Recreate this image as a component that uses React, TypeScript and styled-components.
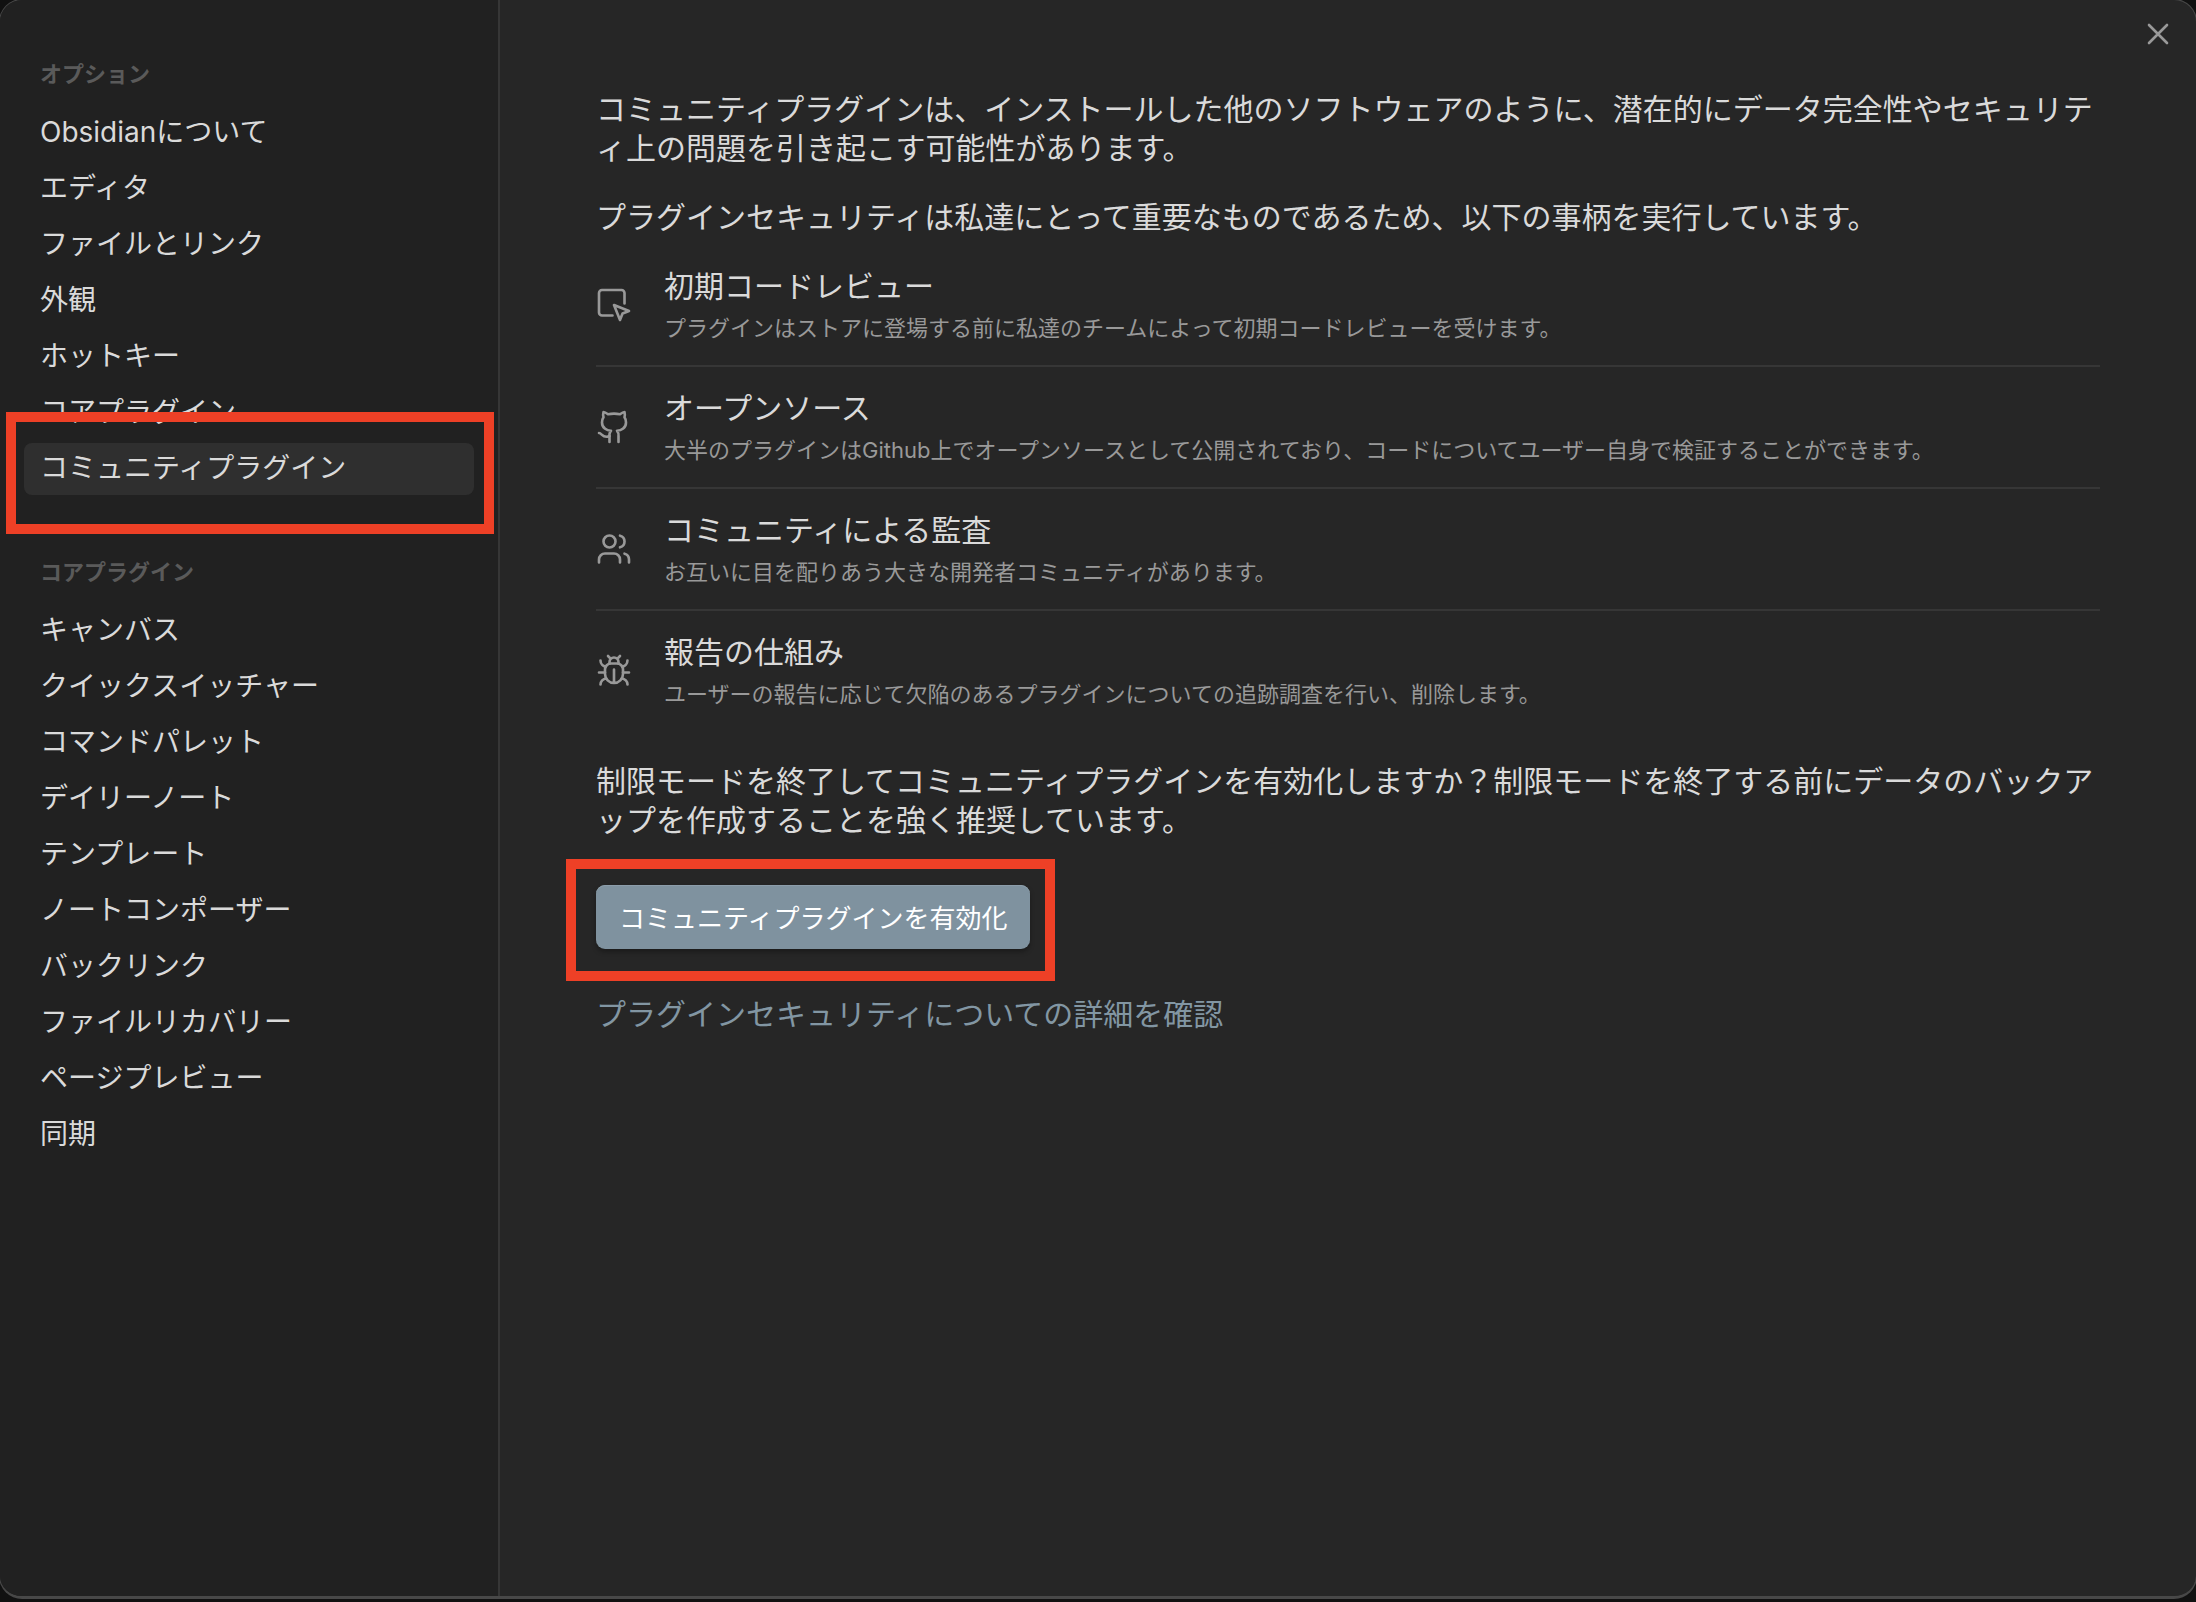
import React from 'react';
import styled, { createGlobalStyle } from 'styled-components';

const sans = `Inter, "Noto Sans CJK JP", sans-serif`;

const GlobalStyle = createGlobalStyle`
  *, *::before, *::after { box-sizing: border-box; }
  html, body, #root { height: 100%; }
  body {
    margin: 0;
    background: #111;
    color: #dadada;
    font-family: ${sans};
    font-size: 30px;
    line-height: 39px;
  }
`;

const Screen = styled.div`
  min-height: 100%;
  display: flex;
  padding-bottom: 4px;
  overflow: hidden;
`;

const Modal = styled.div`
  position: relative;
  flex: 1;
  display: flex;
  overflow: hidden;
  border-bottom: 2px solid #484848;
  border-radius: 22px;
  background: #262626;
  box-shadow: 0 0 0 1px #484848;
`;

const Sidebar = styled.nav`
  flex: 0 0 500px;
  padding: 58px 24px 40px;
  background: #212121;
  border-right: 2px solid #363636;
`;

const Group = styled.section`
  & + & { margin-top: 61px; }
`;

const GroupTitle = styled.h2`
  margin: 0 0 17px;
  padding: 0 16px;
  font-size: 22px;
  line-height: 32px;
  font-weight: 600;
  color: #5a5a5a;
`;

const NavList = styled.ul`
  display: flex;
  flex-direction: column;
  gap: 4px;
  margin: 0;
  padding: 0;
  list-style: none;
`;

const NavEntry = styled.li`
  position: relative;
`;

const NavButton = styled.button<{ $active: boolean }>`
  display: block;
  width: 100%;
  height: 52px;
  padding: 0 16px 6px;
  border: 0;
  border-radius: 8px;
  background: ${(p) => (p.$active ? '#2f2f2f' : 'transparent')};
  color: inherit;
  font-family: inherit;
  font-size: 28px;
  text-align: left;
`;

const Highlight = styled.span<{ $top: number; $right: number; $bottom: number; $left: number }>`
  position: absolute;
  z-index: 1;
  top: -${(p) => p.$top}px;
  right: -${(p) => p.$right}px;
  bottom: -${(p) => p.$bottom}px;
  left: -${(p) => p.$left}px;
  border: 10px solid #ee4026;
  pointer-events: none;
`;

const Content = styled.main`
  flex: 1;
  min-width: 0;
  padding: 90px 96px 40px;
`;

const Paragraph = styled.p`
  margin: 0 0 30px;
  line-break: anywhere;
`;

const Measures = styled.ul`
  margin: 0 0 53px;
  padding: 0;
  list-style: none;
`;

const Measure = styled.li`
  display: flex;
  align-items: center;
  gap: 32px;
  padding: 22px 0;
  & + & { border-top: 2px solid #363636; }
  &:first-child { padding-top: 0; }
  &:last-child { padding-bottom: 0; }
`;

const Icon = styled.svg`
  flex: none;
  width: 36px;
  height: 36px;
  fill: none;
  stroke: #999;
  stroke-width: 1.75;
  stroke-linecap: round;
  stroke-linejoin: round;
`;

const MeasureTitle = styled.h3`
  margin: 0 0 8px;
  font-size: 30px;
  font-weight: 400;
`;

const MeasureText = styled.p`
  margin: 0;
  font-size: 22px;
  line-height: 29px;
  color: #999;
`;

const Action = styled.div`
  position: relative;
  width: fit-content;
  margin: 45px 0 46px;
`;

const PrimaryButton = styled.button`
  display: block;
  height: 64px;
  padding: 0 23px 2px;
  border: 0;
  border-radius: 9px;
  background: #7f929f;
  color: #fff;
  font-family: inherit;
  font-size: 26px;
  box-shadow: inset 0 1px 0 #8c9daa, 0 3px 5px rgba(0, 0, 0, 0.3);
`;

const MoreLink = styled.a`
  color: #8296a3;
  text-decoration: none;
`;

const CloseButton = styled.button`
  position: absolute;
  top: 16px;
  right: 20px;
  display: flex;
  padding: 0;
  border: 0;
  background: none;
`;

const groups = [
  {
    title: 'オプション',
    items: ['Obsidianについて', 'エディタ', 'ファイルとリンク', '外観', 'ホットキー', 'コアプラグイン', 'コミュニティプラグイン'],
  },
  {
    title: 'コアプラグイン',
    items: [
      'キャンバス', 'クイックスイッチャー', 'コマンドパレット', 'デイリーノート', 'テンプレート',
      'ノートコンポーザー', 'バックリンク', 'ファイルリカバリー', 'ページプレビュー', '同期',
    ],
  },
];

const active = 'コミュニティプラグイン';

const measures = [
  {
    title: '初期コードレビュー',
    text: 'プラグインはストアに登場する前に私達のチームによって初期コードレビューを受けます。',
    icon: (
      <>
        <path d="M19 11V4a2 2 0 0 0-2-2H4a2 2 0 0 0-2 2v13a2 2 0 0 0 2 2h7" />
        <path d="m12 12 4 10 1.7-4.3L22 16Z" />
      </>
    ),
  },
  {
    title: 'オープンソース',
    text: '大半のプラグインはGithub上でオープンソースとして公開されており、コードについてユーザー自身で検証することができます。',
    icon: (
      <>
        <path d="M15 22v-4a4.8 4.8 0 0 0-1-3.5c3 0 6-2 6-5.5.08-1.25-.27-2.48-1-3.5.28-1.15.28-2.35 0-3.5 0 0-1 0-3 1.5-2.64-.5-5.36-.5-8 0C6 2 5 2 5 2c-.3 1.15-.3 2.35 0 3.5A5.403 5.403 0 0 0 4 9c0 3.5 3 5.5 6 5.5-.39.49-.68 1.05-.85 1.65-.17.6-.22 1.23-.15 1.85v4" />
        <path d="M9 18c-4.51 2-5-2-7-2" />
      </>
    ),
  },
  {
    title: 'コミュニティによる監査',
    text: 'お互いに目を配りあう大きな開発者コミュニティがあります。',
    icon: (
      <>
        <path d="M16 21v-2a4 4 0 0 0-4-4H6a4 4 0 0 0-4 4v2" />
        <circle cx="9" cy="7" r="4" />
        <path d="M22 21v-2a4 4 0 0 0-3-3.87" />
        <path d="M16 3.13a4 4 0 0 1 0 7.75" />
      </>
    ),
  },
  {
    title: '報告の仕組み',
    text: 'ユーザーの報告に応じて欠陥のあるプラグインについての追跡調査を行い、削除します。',
    icon: (
      <>
        <path d="m8 2 1.88 1.88M14.12 3.88 16 2M9 7.13v-1a3.003 3.003 0 1 1 6 0v1" />
        <path d="M12 20c-3.3 0-6-2.7-6-6v-3a4 4 0 0 1 4-4h4a4 4 0 0 1 4 4v3c0 3.3-2.7 6-6 6M12 20v-9" />
        <path d="M6.53 9C4.6 8.8 3 7.1 3 5M6 13H2M3 21c0-2.1 1.7-3.9 3.8-4" />
        <path d="M20.97 5c0 2.1-1.6 3.8-3.5 4M22 13h-4M17.2 17c2.1.1 3.8 1.9 3.8 4" />
      </>
    ),
  },
];

export default function App() {
  return (
    <>
      <GlobalStyle />
      <Screen lang="ja">
        <Modal>
          <Sidebar>
            {groups.map((group) => (
              <Group key={group.title}>
                <GroupTitle>{group.title}</GroupTitle>
                <NavList>
                  {group.items.map((item) => (
                    <NavEntry key={item}>
                      <NavButton type="button" $active={item === active}>{item}</NavButton>
                      {item === active && <Highlight $top={31} $right={20} $bottom={39} $left={18} />}
                    </NavEntry>
                  ))}
                </NavList>
              </Group>
            ))}
          </Sidebar>
          <Content>
            <Paragraph>
              コミュニティプラグインは、インストールした他のソフトウェアのように、潜在的にデータ完全性やセキュリティ上の問題を引き起こす可能性があります。
            </Paragraph>
            <Paragraph>
              プラグインセキュリティは私達にとって重要なものであるため、以下の事柄を実行しています。
            </Paragraph>
            <Measures>
              {measures.map((m) => (
                <Measure key={m.title}>
                  <Icon viewBox="0 0 24 24" aria-hidden="true">{m.icon}</Icon>
                  <div>
                    <MeasureTitle>{m.title}</MeasureTitle>
                    <MeasureText>{m.text}</MeasureText>
                  </div>
                </Measure>
              ))}
            </Measures>
            <Paragraph>
              制限モードを終了してコミュニティプラグインを有効化しますか？制限モードを終了する前にデータのバックアップを作成することを強く推奨しています。
            </Paragraph>
            <Action>
              <PrimaryButton type="button">コミュニティプラグインを有効化</PrimaryButton>
              <Highlight $top={26} $right={25} $bottom={32} $left={30} />
            </Action>
            <MoreLink href="#security">プラグインセキュリティについての詳細を確認</MoreLink>
          </Content>
          <CloseButton type="button" aria-label="閉じる">
            <Icon viewBox="0 0 24 24" aria-hidden="true">
              <path d="M18 6 6 18M6 6l12 12" />
            </Icon>
          </CloseButton>
        </Modal>
      </Screen>
    </>
  );
}
